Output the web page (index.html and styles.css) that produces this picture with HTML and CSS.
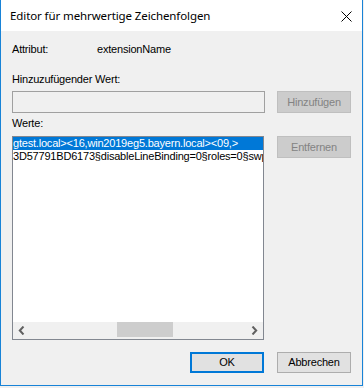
FILE: index.html
```html
<!DOCTYPE html>
<html lang="de">
<head>
<meta charset="utf-8">
<title>Editor für mehrwertige Zeichenfolgen</title>
<link rel="stylesheet" href="styles.css">
</head>
<body>
<div class="window">
  <div class="titlebar">
    <span class="title">Editor für mehrwertige Zeichenfolgen</span>
    <svg class="close" width="11" height="11" viewBox="0 0 11 11" aria-hidden="true">
      <path d="M0.5 0.5 L10.5 10.5 M10.5 0.5 L0.5 10.5" stroke="#000" stroke-width="1" fill="none"/>
    </svg>
  </div>
  <div class="content">
    <div class="attr-row">
      <span class="attr-label">Attribut:</span>
      <span class="attr-value">extensionName</span>
    </div>
    <div class="label label-add">Hinzuzufügender Wert:</div>
    <div class="row row-add">
      <div class="textbox"></div>
      <button class="btn btn-disabled" disabled>Hinzufügen</button>
    </div>
    <div class="label label-values">Werte:</div>
    <div class="row row-list">
      <div class="listbox">
        <div class="items">
          <div class="item item-selected">gtest.local&gt;&lt;16,win2019eg5.bayern.local&gt;&lt;09,&gt;</div>
          <div class="item">3D57791BD6173§disableLineBinding=0§roles=0§swp</div>
        </div>
        <div class="hscroll">
          <div class="arrow">
            <svg width="7" height="9" viewBox="0 0 7 9"><polyline points="5.5,0.5 1.8,4.5 5.5,8.5" fill="none" stroke="#606060" stroke-width="2"/></svg>
          </div>
          <div class="track">
            <div class="thumb" style="margin-left:87px"></div>
          </div>
          <div class="arrow">
            <svg width="7" height="9" viewBox="0 0 7 9"><polyline points="1.5,0.5 5.2,4.5 1.5,8.5" fill="none" stroke="#606060" stroke-width="2"/></svg>
          </div>
        </div>
      </div>
      <button class="btn btn-disabled" disabled>Entfernen</button>
    </div>
    <div class="footer">
      <button class="btn btn-default">OK</button>
      <button class="btn btn-normal">Abbrechen</button>
    </div>
  </div>
</div>
</body>
</html>
```

FILE: styles.css
```css
html, body {
  margin: 0;
  padding: 0;
  background: #f0f0f0;
}

.window {
  width: 363px;
  height: 386px;
  box-sizing: border-box;
  border: 1px solid #1883d7;
  border-top: none;
  background: #f0f0f0;
  font-family: "Liberation Sans", Arial, sans-serif;
  font-size: 11px;
  letter-spacing: -0.2px;
  color: #000;
  display: flex;
  flex-direction: column;
}

.titlebar {
  height: 31px;
  flex: none;
  background: #fff;
  display: flex;
  align-items: center;
  justify-content: space-between;
  padding: 0 10px 0 9px;
}

.title {
  font-family: "Noto Sans", Lato, sans-serif;
  font-size: 11.5px;
  letter-spacing: -0.1px;
  line-height: 16px;
  padding-top: 1px;
  color: #000;
}

.close {
  display: block;
  margin-top: 1px;
}

.content {
  padding: 12px 11px 0 11px;
  display: flex;
  flex-direction: column;
}

.attr-row {
  display: flex;
  line-height: 13px;
  height: 13px;
}

.attr-label {
  width: 85px;
}

.label {
  line-height: 13px;
  height: 13px;
}

.label-add {
  margin-top: 17px;
}

.label-values {
  margin-top: 4px;
}

.row {
  display: flex;
  justify-content: space-between;
  align-items: flex-start;
}

.row-add {
  margin-top: 5px;
}

.row-list {
  margin-top: 6px;
}

.textbox {
  width: 253px;
  height: 22px;
  box-sizing: border-box;
  border: 1px solid #a0a0a0;
  background: #f0f0f0;
}

.btn {
  width: 74px;
  height: 22px;
  box-sizing: border-box;
  margin: 0;
  padding: 0;
  font-family: "Liberation Sans", Arial, sans-serif;
  font-size: 11px;
  letter-spacing: -0.2px;
  line-height: 13px;
  text-align: center;
  border-radius: 0;
  color: #000;
}

.btn-disabled {
  background: #cccccc;
  border: 1px solid #bfbfbf;
  color: #838383;
}

.btn-normal {
  background: #e1e1e1;
  border: 1px solid #adadad;
}

.btn-default {
  background: #e1e1e1;
  border: 2px solid #0078d7;
}

.listbox {
  width: 252px;
  height: 204px;
  box-sizing: border-box;
  border: 1px solid #828790;
  background: #fff;
  display: flex;
  flex-direction: column;
}

.items {
  flex: 1;
  overflow: hidden;
}

.item {
  height: 13px;
  line-height: 13px;
  white-space: nowrap;
  overflow: hidden;
}

.item-selected {
  background: #0078d7;
  color: #fff;
}

.hscroll {
  height: 17px;
  flex: none;
  display: flex;
  background: #f0f0f0;
}

.arrow {
  width: 17px;
  height: 17px;
  display: flex;
  align-items: center;
  justify-content: center;
}

.arrow svg {
  display: block;
}

.track {
  flex: 1;
  display: flex;
}

.thumb {
  width: 56px;
  height: 15px;
  background: #cdcdcd;
}

.footer {
  margin-top: 12px;
  display: flex;
  justify-content: flex-end;
  gap: 13px;
}

.footer .btn {
  height: 21px;
}
```
